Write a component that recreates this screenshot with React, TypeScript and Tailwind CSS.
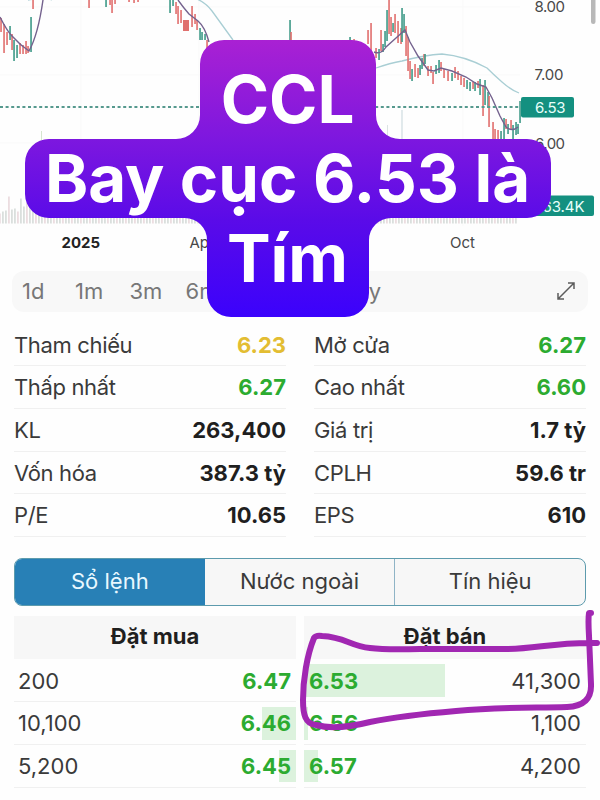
interface Stat {
  label: string
  value: string
  color?: string
}

interface Order {
  volume: string
  price: string
  bar: number
}

const UP = '#3f9a88'
const DOWN = '#e0706e'

// x, wick top, wick bottom, direction
type Candle = [number, number, number, 'u' | 'd']

const CANDLES: Candle[] = [
  [1, 18, 32, 'd'], [4, 24, 53, 'd'], [7, 32, 45, 'd'], [10, 26, 40, 'u'], [12, 34, 50, 'd'],
  [14, 40, 61, 'u'], [17, 45, 58, 'u'], [20, 43, 54, 'd'], [23, 45, 54, 'd'], [26, 41, 54, 'd'],
  [28, 46, 53, 'd'], [31, 17, 52, 'u'], [33, 0, 9, 'd'],
  [89, 0, 8, 'd'], [106, 0, 7, 'u'], [110, 0, 5, 'd'], [112, 0, 13, 'd'], [115, 0, 4, 'd'],
  [129, 0, 2, 'd'], [134, 0, 3, 'd'], [138, 0, 2, 'd'],
  [170, 0, 13, 'u'], [173, 0, 6, 'u'], [176, 2, 14, 'd'], [178, 6, 24, 'd'], [181, 10, 23, 'd'],
  [192, 6, 27, 'd'], [195, 14, 24, 'd'], [197, 20, 30, 'd'], [200, 28, 40, 'u'], [202, 32, 40, 'u'],
  [205, 34, 40, 'u'], [207, 40, 52, 'd'],
  [290, 20, 44, 'u'], [291, 32, 44, 'd'], [350, 37, 44, 'u'], [354, 39, 44, 'd'],
  [368, 30, 44, 'd'], [371, 23, 56, 'd'], [376, 48, 58, 'd'], [379, 49, 60, 'u'],
  [381, 30, 51, 'd'], [383, 44, 52, 'u'], [385, 31, 47, 'u'], [387, 10, 41, 'u'], [389, 0, 34, 'd'],
  [391, 17, 36, 'd'], [393, 23, 32, 'u'], [395, 14, 33, 'd'], [398, 21, 43, 'd'], [401, 28, 44, 'd'],
  [402, 8, 42, 'u'], [404, 14, 33, 'u'], [406, 26, 56, 'd'], [408, 37, 71, 'd'], [410, 61, 79, 'd'],
  [412, 69, 81, 'u'], [415, 64, 77, 'd'], [418, 68, 78, 'd'], [420, 65, 75, 'u'], [422, 58, 69, 'u'],
  [424, 54, 66, 'd'], [425, 54, 64, 'u'], [428, 66, 76, 'd'], [431, 66, 73, 'd'], [433, 72, 84, 'd'],
  [436, 65, 74, 'u'], [439, 60, 73, 'u'], [441, 62, 71, 'd'], [444, 69, 78, 'd'], [448, 71, 81, 'd'],
  [452, 73, 81, 'u'], [455, 67, 78, 'd'], [458, 71, 80, 'd'], [461, 76, 85, 'd'], [464, 78, 87, 'd'],
  [467, 80, 89, 'u'], [470, 82, 91, 'u'], [473, 82, 89, 'd'], [475, 82, 91, 'u'], [478, 81, 88, 'd'],
  [480, 79, 95, 'u'], [483, 85, 116, 'd'], [485, 80, 105, 'u'], [488, 92, 108, 'u'], [489, 96, 127, 'd'],
  [493, 122, 143, 'd'], [495, 129, 143, 'd'], [498, 130, 139, 'd'], [501, 131, 143, 'u'],
  [504, 118, 141, 'u'], [506, 119, 129, 'd'], [508, 124, 134, 'u'], [511, 120, 130, 'd'],
  [513, 125, 140, 'u'], [516, 122, 135, 'u'], [518, 124, 134, 'u'], [520, 101, 123, 'u'],
]

// tall bars at the left edge, the rest is a low even strip
const VOLUME_START = [10, 12, 13, 27, 14, 15, 12, 25, 17, 21, 20, 18, 13, 16, 14, 12, 13, 15, 12, 14, 18, 14]
const VOLUME = Array.from({ length: 173 }, (_, i) => VOLUME_START[i] ?? 7 + ((i * 5) % 6))

const STATS_LEFT: Stat[] = [
  { label: 'Tham chiếu', value: '6.23', color: 'text-[#e3bd32]' },
  { label: 'Thấp nhất', value: '6.27', color: 'text-[#2cab30]' },
  { label: 'KL', value: '263,400' },
  { label: 'Vốn hóa', value: '387.3 tỷ' },
  { label: 'P/E', value: '10.65' },
]

const STATS_RIGHT: Stat[] = [
  { label: 'Mở cửa', value: '6.27', color: 'text-[#2cab30]' },
  { label: 'Cao nhất', value: '6.60', color: 'text-[#2cab30]' },
  { label: 'Giá trị', value: '1.7 tỷ' },
  { label: 'CPLH', value: '59.6 tr' },
  { label: 'EPS', value: '610' },
]

const BUY: Order[] = [
  { volume: '200', price: '6.47', bar: 0 },
  { volume: '10,100', price: '6.46', bar: 34 },
  { volume: '5,200', price: '6.45', bar: 17 },
]

const SELL: Order[] = [
  { volume: '41,300', price: '6.53', bar: 141 },
  { volume: '1,100', price: '6.56', bar: 4 },
  { volume: '4,200', price: '6.57', bar: 14 },
]

function PriceChart() {
  return (
    <svg width="600" height="271" viewBox="0 0 600 271" className="block shrink-0">
      <path d="M0 7H520M0 75H520M0 143H520M81 0V226M199 0V226M463 0V226" fill="none" stroke="#f9f9f9" />

      {VOLUME.map((h, i) => (
        <rect key={i} x={i * 3 - 1} y={223.5 - h} width="1.8" height={h} fill={i % 3 ? '#dadfdd' : '#ecdde0'} />
      ))}
      <path d="M41.500 131V140" stroke="#d5e5cf" />
      <path d="M402 110V140" stroke="#c5d5da" />
      <path d="M387.500 125V140" stroke="#dce3e3" />

      {/* moving averages */}
      <path
        d="M28 0Q45 -3 52 0M197 -1Q206 3 212 11L233 40M376 68Q390 63 402 61Q425 55 442 54Q465 56 487 68Q494 75 502 82Q511 90 519 93"
        fill="none" stroke="#a9ced4" strokeWidth="1.300"
      />
      {CANDLES.map(([x, top, bottom, dir], i) => (
        <rect key={i} x={x - 0.9} y={top} width="1.9" height={bottom - top} fill={dir === 'u' ? UP : DOWN} opacity=".85" />
      ))}
      <rect x="183" y="20" width="6" height="11" fill={DOWN} />
      <path
        d="M0 17Q7 31 12 36Q20 45 29 51Q38 35 43 0M178 0Q183 7 189 14L198 21Q205 27 209 42M374 52Q381 55 386 47L396 38L405 30L410 42L418 56L428 70L434 71L441 68L452 71L466 77L477 84L486 87L492 98L500 116L506 127Q512 132 518 127"
        fill="none" stroke="#74628e" strokeWidth="1.400"
      />

      <path d="M0 107H520" stroke="#56998e" strokeWidth="1.800" strokeDasharray="3 2.600" />
      <rect x="521" y="97" width="53" height="20.500" rx="2" fill="#149080" />
      <rect x="521" y="195.500" width="73" height="20.500" rx="2" fill="#149080" />
      <g fontSize="15" fill="#484848">
        <text x="534.500" y="11.500" textLength="30.500">8.00</text>
        <text x="534.500" y="80" textLength="29">7.00</text>
        <text x="535" y="148.500" textLength="30">6.00</text>
        <text x="535" y="112.500" textLength="30.500" fill="#e8fffa">6.53</text>
        <text x="533.500" y="211.500" textLength="51" fill="#e8fffa">263.4K</text>
        <text x="189.500" y="247.500">Apr</text>
        <text x="450" y="247.500" textLength="25">Oct</text>
        <text x="61.500" y="247.500" textLength="38.500" fontWeight="700" fill="#222">2025</text>
      </g>
      <rect x="591" y="-8" width="4.500" height="32" rx="2.200" fill="#b8b8b8" />
    </svg>
  )
}

function StatColumn({ stats }: { stats: Stat[] }) {
  return (
    <div className="flex-1">
      {stats.map(s => (
        <div
          key={s.label}
          className="flex h-[42.7px] items-center justify-between border-b border-[#f0f0f0] pt-[1.600px] text-[22px]"
        >
          <span className="tracking-[-0.35px]">{s.label}</span>
          <span className={`-mr-px pr-px font-bold ${s.color ?? 'text-[#1f1f1f]'}`}>{s.value}</span>
        </div>
      ))}
    </div>
  )
}

function OrderColumn({ title, orders, side }: { title: string; orders: Order[]; side: 'buy' | 'sell' }) {
  const buy = side === 'buy'
  return (
    <div className="flex-1">
      <div className="flex h-[43.500px] items-center justify-center bg-[#f7f7f7] pb-[2px] text-[22px] font-bold text-[#1f1f1f]">
        {title}
      </div>
      {orders.map(o => (
        <div
          key={o.price}
          className={`relative flex h-[42.7px] items-center justify-between border-b border-[#f0f0f0] px-[5px] pt-[2px] text-[22px] ${buy ? '' : 'flex-row-reverse'}`}
        >
          <div
            className={`absolute top-[5px] h-[32.500px] bg-[#dcf2dd] ${buy ? 'right-0' : 'left-0'}`}
            style={{ width: o.bar }}
          />
          <span className="relative -ml-px">{o.volume}</span>
          <span className="relative font-bold text-[#2cab30]">{o.price}</span>
        </div>
      ))}
    </div>
  )
}

function Sticker() {
  return (
    <div className="absolute top-10 left-[25px] h-[277px] w-[527px]">
      <svg width="527" height="277" viewBox="25 40 527 277" className="absolute inset-0">
        <defs>
          <linearGradient id="sticker" x1="0" y1="0" x2="0" y2="1">
            <stop offset="0" stopColor="#a921d3" />
            <stop offset=".36" stopColor="#7d17df" />
            <stop offset=".65" stopColor="#5a0be8" />
            <stop offset="1" stopColor="#3b02fc" />
          </linearGradient>
        </defs>
        <path
          d="M224 40H352A24 24 0 0 1 376 64V115A24 24 0 0 0 400 139H527A24 24 0 0 1 551 163V194A24 24 0 0 1 527 218H391A22 22 0 0 0 369 240V293A24 24 0 0 1 345 317H231A24 24 0 0 1 207 293V240A22 22 0 0 0 185 218H49A24 24 0 0 1 25 194V163A24 24 0 0 1 49 139H176A24 24 0 0 0 200 115V64A24 24 0 0 1 224 40Z"
          fill="url(#sticker)"
        />
      </svg>
      <div className="relative -left-px flex flex-col items-center pt-[20px] text-[65.4px] leading-[79.3px] font-bold whitespace-nowrap text-white">
        <span>CCL</span>
        <span>Bay cục 6.53 là</span>
        <span>Tím</span>
      </div>
    </div>
  )
}

export default function App() {
  return (
    <div className="relative flex h-[800px] w-[600px] flex-col overflow-hidden bg-[#fefefe] font-['Inter','Noto_Sans',sans-serif] text-[#3a3a3a]">
      <PriceChart />

      <div className="mx-3 flex h-[41px] shrink-0 items-center rounded-xl bg-[#f8f8f8] pr-[12px] pb-[1px] pl-[10px] text-[22px] text-[#777]">
        <span className="w-[53px]">1d</span>
        <span className="w-[54.500px]">1m</span>
        <span className="w-[56px]">3m</span>
        <span className="w-[170px]">6m</span>
        <span>5y</span>
        <svg width="20" height="20" viewBox="0 0 20 20" className="ml-auto" fill="none" stroke="#5c5c5c" strokeWidth="1.500">
          <path d="M2 18L18 2M12 2H18V8M2 12V18H8" />
        </svg>
      </div>

      <div className="mt-[11.500px] flex gap-7 px-[14px]">
        <StatColumn stats={STATS_LEFT} />
        <StatColumn stats={STATS_RIGHT} />
      </div>

      <div className="mx-[14px] mt-[21px] flex h-[48px] shrink-0 overflow-hidden rounded-lg border-[1.500px] border-[#5d9bad] bg-[#f7f7f7] text-[22px]">
        <div className="flex flex-1 items-center justify-center bg-[#2880b6] text-[#e9f8ff]">Sổ lệnh</div>
        <div className="flex flex-1 items-center justify-center">Nước ngoài</div>
        <div className="flex flex-1 items-center justify-center border-l border-[#8fb4c6]">Tín hiệu</div>
      </div>

      <div className="mx-[14px] mt-[10px] flex gap-2">
        <OrderColumn title="Đặt mua" orders={BUY} side="buy" />
        <OrderColumn title="Đặt bán" orders={SELL} side="sell" />
      </div>

      <Sticker />

      {/* hand-drawn marker around the best ask */}
      <svg width="600" height="800" viewBox="0 0 600 800" className="pointer-events-none absolute inset-0">
        <path
          d="M591 613L589 613Q588 619 589 636L591 684Q592 706 567 707C530 708 500 707 456 711C420 714 390 718 370 722C350 727 330 729 316 725C305 724 303 714 303 700C303 680 307 655 314 638Q316 635 322 636C345 637 350 646 370 648Q385 650 420 649H500C535 650 550 642 597 643"
          fill="none" stroke="#a127b2" strokeWidth="6" strokeLinecap="round" strokeLinejoin="round"
        />
      </svg>
    </div>
  )
}
